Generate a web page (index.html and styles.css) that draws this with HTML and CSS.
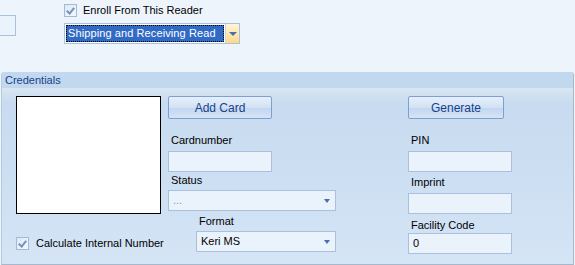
FILE: index.html
```html
<!DOCTYPE html>
<html lang="en">
<head>
    <meta charset="UTF-8">
    <title>Reader Credentials</title>
    <link rel="stylesheet" href="styles.css">
</head>
<body>
    <div class="top">
        <div class="stub"></div>
        <div class="reader">
            <label class="check-row">
                <span class="check checked"></span>
                <span>Enroll From This Reader</span>
            </label>
            <div class="reader-select">
                <div class="reader-value">Shipping and Receiving Read</div>
                <div class="reader-btn"><span class="arrow"></span></div>
            </div>
        </div>
    </div>

    <section class="group">
        <div class="group-title">Credentials</div>
        <div class="group-body">
            <div class="col col-left">
                <div class="picture"></div>
                <label class="check-row calc">
                    <span class="check checked"></span>
                    <span>Calculate Internal Number</span>
                </label>
            </div>

            <div class="col col-mid">
                <button class="btn btn-add">Add Card</button>
                <div class="label l-card">Cardnumber</div>
                <div class="field w-104"></div>
                <div class="label l-status">Status</div>
                <div class="combo w-168"><span class="dots">...</span><span class="arrow"></span></div>
                <div class="format">
                    <div class="label l-format">Format</div>
                    <div class="combo w-140"><span>Keri MS</span><span class="arrow"></span></div>
                </div>
            </div>

            <div class="col col-right">
                <button class="btn btn-gen">Generate</button>
                <div class="label l-card">PIN</div>
                <div class="field w-104"></div>
                <div class="label l-imprint">Imprint</div>
                <div class="field w-104"></div>
                <div class="label l-facility">Facility Code</div>
                <div class="field w-104"><span>0</span></div>
            </div>
        </div>
    </section>
</body>
</html>
```

FILE: styles.css
```css
* {
    margin: 0;
    padding: 0;
    box-sizing: border-box;
}

body {
    font-family: 'Liberation Sans', Arial, sans-serif;
    font-size: 11px;
    line-height: 13px;
    color: #000;
    background-color: #eef4fc;
    width: 575px;
    height: 265px;
    overflow: hidden;
    white-space: nowrap;
}

/* top area */
.top {
    display: flex;
    height: 72px;
}

.stub {
    width: 16px;
    height: 21px;
    margin-top: 15px;
    border: 1px solid #a9c0df;
    border-left: none;
    background-color: #eaf2fc;
}

.reader {
    margin-left: 48px;
    padding-top: 4px;
}

.check-row {
    display: flex;
    align-items: center;
    gap: 6px;
    height: 13px;
}

.check {
    flex: none;
    width: 13px;
    height: 13px;
    border: 1px solid #a3b9d8;
    background: linear-gradient(135deg, #dde8f6, #f4f8fe);
    position: relative;
}

.check.checked:after {
    content: '';
    position: absolute;
    left: 3px;
    top: 1px;
    width: 3px;
    height: 6px;
    border: solid #7890bc;
    border-width: 0 2px 2px 0;
    transform: rotate(40deg);
}

.reader-select {
    display: flex;
    margin-top: 6px;
    width: 176px;
    height: 21px;
    border: 1px solid #a9c0df;
    background-color: #fff;
    padding: 1px;
}

.reader-value {
    flex: 1;
    min-width: 0;
    overflow: hidden;
    border: 1px dotted #e0a030;
    outline: 1px dotted #000;
    outline-offset: -1px;
    background-color: #316ac5;
    color: #fff;
    padding-left: 1px;
    font-size: 11px;
    line-height: 15px;
    letter-spacing: 0.1px;
}

.reader-btn {
    flex: none;
    width: 14px;
    margin: -1px -1px -1px 1px;
    border-left: 1px solid #c6d6ec;
    background: linear-gradient(#fff6d8, #ffd88a);
    display: flex;
    align-items: center;
    justify-content: center;
}

.arrow {
    width: 0;
    height: 0;
    border-left: 4px solid transparent;
    border-right: 4px solid transparent;
    border-top: 4px solid #4a6fb0;
}

/* group box */
.group {
    margin-left: 1px;
    width: 573px;
    height: 193px;
    border-right: 1px solid #a7b8cc;
    border-bottom: 1px solid #a7b8cc;
    border-left: 1px solid #b6cae0;
    border-radius: 3px 3px 0 0;
    overflow: hidden;
}

.group-title {
    height: 16px;
    background-color: #c2d8ee;
    color: #15428b;
    padding-left: 3px;
    line-height: 16px;
}

.group-body {
    height: 176px;
    display: flex;
    padding-left: 14px;
    padding-top: 8px;
    background: linear-gradient(#dae6f2 0, #c8dbf0 14px, #cddff2 55%, #d5e5f6 100%);
}

.col {
    display: flex;
    flex-direction: column;
}

.col-left {
    width: 145px;
}

.picture {
    width: 145px;
    height: 118px;
    border: 1px solid #000;
    background-color: #fff;
}

.calc {
    margin-top: 23px;
    gap: 7px;
}

.col-mid {
    margin-left: 7px;
    width: 168px;
}

.col-right {
    margin-left: 72px;
    width: 104px;
}

.btn {
    height: 23px;
    border: 1px solid #7f9fd0;
    border-radius: 2px;
    background: linear-gradient(#e6effa, #d2e2f4 50%, #c2d6f0 51%, #d6e4f6);
    color: #15428b;
    font-family: inherit;
    font-size: 12px;
}

.btn-add {
    width: 104px;
}

.btn-gen {
    width: 96px;
}

.label {
    height: 13px;
    padding-left: 3px;
}

.l-card {
    margin-top: 15px;
    margin-bottom: 4px;
}

.l-status {
    margin-top: 2px;
    margin-bottom: 3px;
}

.l-imprint {
    margin-top: 4px;
    margin-bottom: 4px;
}

.l-facility {
    margin-top: 5px;
    margin-bottom: 1px;
}

.field,
.combo {
    height: 21px;
    border: 1px solid #a9c0df;
    background-color: #eaf2fc;
    padding-left: 4px;
    line-height: 19px;
    font-size: 11px;
}

.combo {
    display: flex;
    align-items: center;
    justify-content: space-between;
    padding-right: 5px;
}

.combo .arrow {
    border-left-width: 3.5px;
    border-right-width: 3.5px;
}

.dots {
    color: #7f96b8;
}

.w-104 {
    width: 104px;
}

.w-168 {
    width: 168px;
}

.w-140 {
    width: 140px;
}

.format {
    margin-left: 28px;
    margin-top: 4px;
}

.l-format {
    margin-bottom: 3px;
}
```
